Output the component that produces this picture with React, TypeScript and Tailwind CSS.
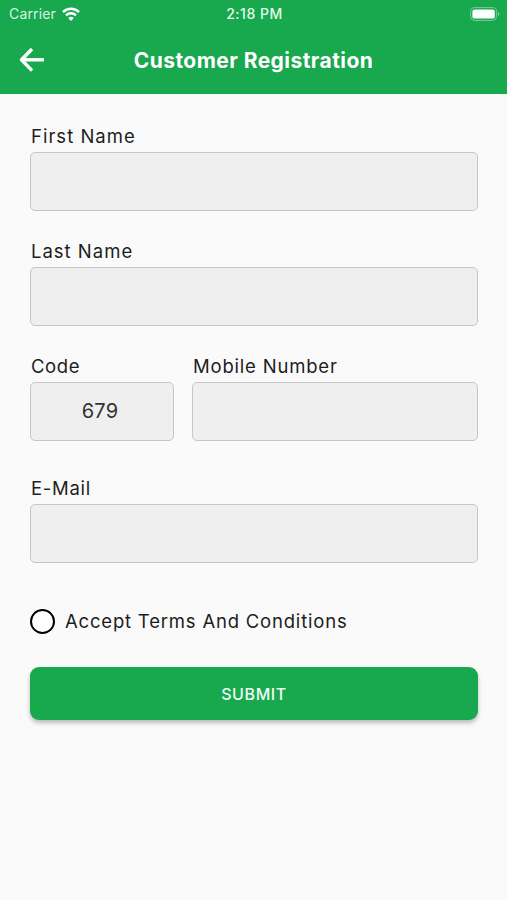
import type { ReactNode } from 'react'

const StatusBar = () => {
  return (
    <div className="grid h-7 grid-cols-3 items-center pl-[9px] pr-[7px] leading-none">
      <div className="flex items-center gap-1.5">
        <span className="text-[14px] tracking-[0.15px] text-[#d5f5e0]">Carrier</span>
        <svg className="h-[14px] w-[18px]" viewBox="0 0 18 14" fill="none">
          <path d="M1 5.1a11.4 11.4 0 0 1 16 0" stroke="white" strokeWidth="2.6" />
          <path d="M4 8.3a7.1 7.1 0 0 1 10 0" stroke="white" strokeWidth="2.4" />
          <path d="M9 14 6.2 11a4 4 0 0 1 5.6 0Z" fill="white" />
        </svg>
      </div>
      <span className="text-center text-[14px] font-medium tracking-[0.5px] text-[#e6faec]">2:18 PM</span>
      <svg className="h-[14px] w-[30px] justify-self-end" viewBox="0 0 30 14" fill="none">
        <rect x="0.6" y="0.6" width="26" height="12.8" rx="4" stroke="#74d193" strokeWidth="1" />
        <rect x="2.4" y="2.4" width="22.4" height="9.2" rx="2.2" fill="white" />
        <path d="M28 4.8c2 1 2 3.4 0 4.4Z" fill="#74d193" />
      </svg>
    </div>
  )
}

const Header = () => {
  return (
    <header className="h-[94px] bg-[#18a84e] text-white">
      <StatusBar />
      <div className="grid h-16 grid-cols-[60px_1fr_60px] items-center">
        <button aria-label="Back" className="ml-[19px] w-[26px]">
          <svg className="h-[26px] w-[26px]" viewBox="0 0 26 26" fill="none" stroke="white" strokeWidth="3.4">
            <path d="M13 2 2.5 12.8 13 23.6" strokeLinejoin="round" />
            <path d="M2.5 12.8H25" />
          </svg>
        </button>
        <h1 className="pt-0.5 text-center text-[21px] font-bold tracking-[0.45px]">Customer Registration</h1>
      </div>
    </header>
  )
}

const Field = ({ label, value, className = '' }: { label: ReactNode; value?: string; className?: string }) => {
  return (
    <label className={className}>
      <span className="mb-1 block pl-px text-[18.5px] leading-6">{label}</span>
      <input
        defaultValue={value}
        className="block h-[59px] w-full rounded-[5px] border border-[#c6c6c6] bg-[#efefef] pb-0.5 pl-2 pr-3 text-center text-[20px] tracking-[0.2px] text-[#333] outline-none"
      />
    </label>
  )
}

const App = () => {
  return (
    <div className="min-h-screen bg-[#fafafa] font-['Inter','Liberation_Sans',sans-serif] text-[#1d1d1d]">
      <Header />
      <form className="flex flex-col pl-[30px] pr-[29px] pt-[30px]">
        <Field label="First Name" className="tracking-[1px]" />
        <Field label="Last Name" className="mt-7 tracking-[1px]" />
        <div className="mt-7 flex gap-[18px]">
          <Field label="Code" value="679" className="w-[144px] tracking-[0.6px]" />
          <Field label="Mobile Number" className="flex-1 tracking-[0.8px]" />
        </div>
        <Field label="E-Mail" className="mt-[35px] tracking-[0.7px]" />
        <div className="mt-[46px] flex h-[25px] items-center gap-2.5">
          <span className="size-[25px] rounded-full border-2 border-black bg-white" />
          <span className="pt-px text-[18.5px] tracking-[0.8px]">Accept Terms And Conditions</span>
        </div>
        <button
          type="button"
          className="mt-[33px] h-[53px] rounded-[9px] bg-[#18a84e] text-[16px] font-medium tracking-[0.6px] text-[#effcf3] shadow-[0_3px_4px_rgba(0,0,0,0.25)]"
        >
          SUBMIT
        </button>
      </form>
    </div>
  )
}

export default App
